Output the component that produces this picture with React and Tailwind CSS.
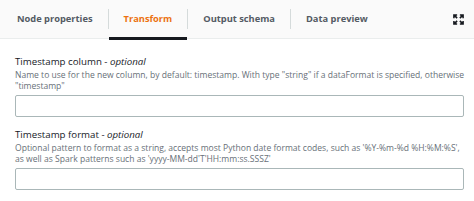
const tabs = ['Node properties', 'Transform', 'Output schema', 'Data preview'];

function ExpandIcon() {
    return (
        <svg width="11" height="11" viewBox="0 0 12 12" fill="none" stroke="#16191f" strokeWidth="1.7">
            <path d="M1 4.5V1h3.5M1 1l3.5 3.5" />
            <path d="M11 4.5V1H7.5M11 1L7.5 4.5" />
            <path d="M1 7.5V11h3.5M1 11l3.5-3.5" />
            <path d="M11 7.5V11H7.5M11 11L7.5 7.5" />
        </svg>
    );
}

function Field({ label, lines }) {
    return (
        <div className="flex flex-col">
            <p className="text-[9.7px] leading-[13px] text-[#16191f]">
                {label} - <i>optional</i>
            </p>
            <p className="text-[8.55px] leading-[11px] text-[#687078] mt-[1.5px] whitespace-nowrap">
                {lines[0]}
                <br />
                {lines[1]}
            </p>
            <input className="mt-[3.5px] h-[22px] w-full rounded-[2px] border border-[#aab7b8] bg-white outline-none" />
        </div>
    );
}

export default function App() {
    return (
        <div className="w-[474px] h-[201px] bg-white overflow-hidden" style={{ fontFamily: '"Open Sans", sans-serif' }}>
            <div className="flex items-stretch h-[39px] bg-[#fafafa] border-b border-[#eaeded] pl-[2px] pr-[10px]">
                {tabs.map((t, i) => (
                    <div key={t} className="flex items-center">
                        {i > 0 && <div className="w-px h-[20px] bg-[#d5dbdb]" />}
                        <div
                            className={`relative h-full flex items-center px-[15px] text-[9.3px] font-bold ${
                                t === 'Transform' ? 'text-[#ec7211]' : 'text-[#545b64]'
                            }`}
                        >
                            {t}
                            {t === 'Transform' && <div className="absolute left-0 right-0 bottom-[-2px] h-[3px] bg-[#16191f]" />}
                        </div>
                    </div>
                ))}
                <div className="ml-auto flex items-center">
                    <ExpandIcon />
                </div>
            </div>
            <div className="flex flex-col gap-[11px] pl-[15px] pr-[10px] pt-[16px]">
                <Field
                    label="Timestamp column"
                    lines={[
                        'Name to use for the new column, by default: timestamp. With type "string" if a dataFormat is specified, otherwise',
                        '"timestamp"',
                    ]}
                />
                <Field
                    label="Timestamp format"
                    lines={[
                        "Optional pattern to format as a string, accepts most Python date format codes, such as '%Y-%m-%d %H:%M:%S',",
                        "as well as Spark patterns such as 'yyyy-MM-dd'T'HH:mm:ss.SSSZ'",
                    ]}
                />
            </div>
        </div>
    );
}
